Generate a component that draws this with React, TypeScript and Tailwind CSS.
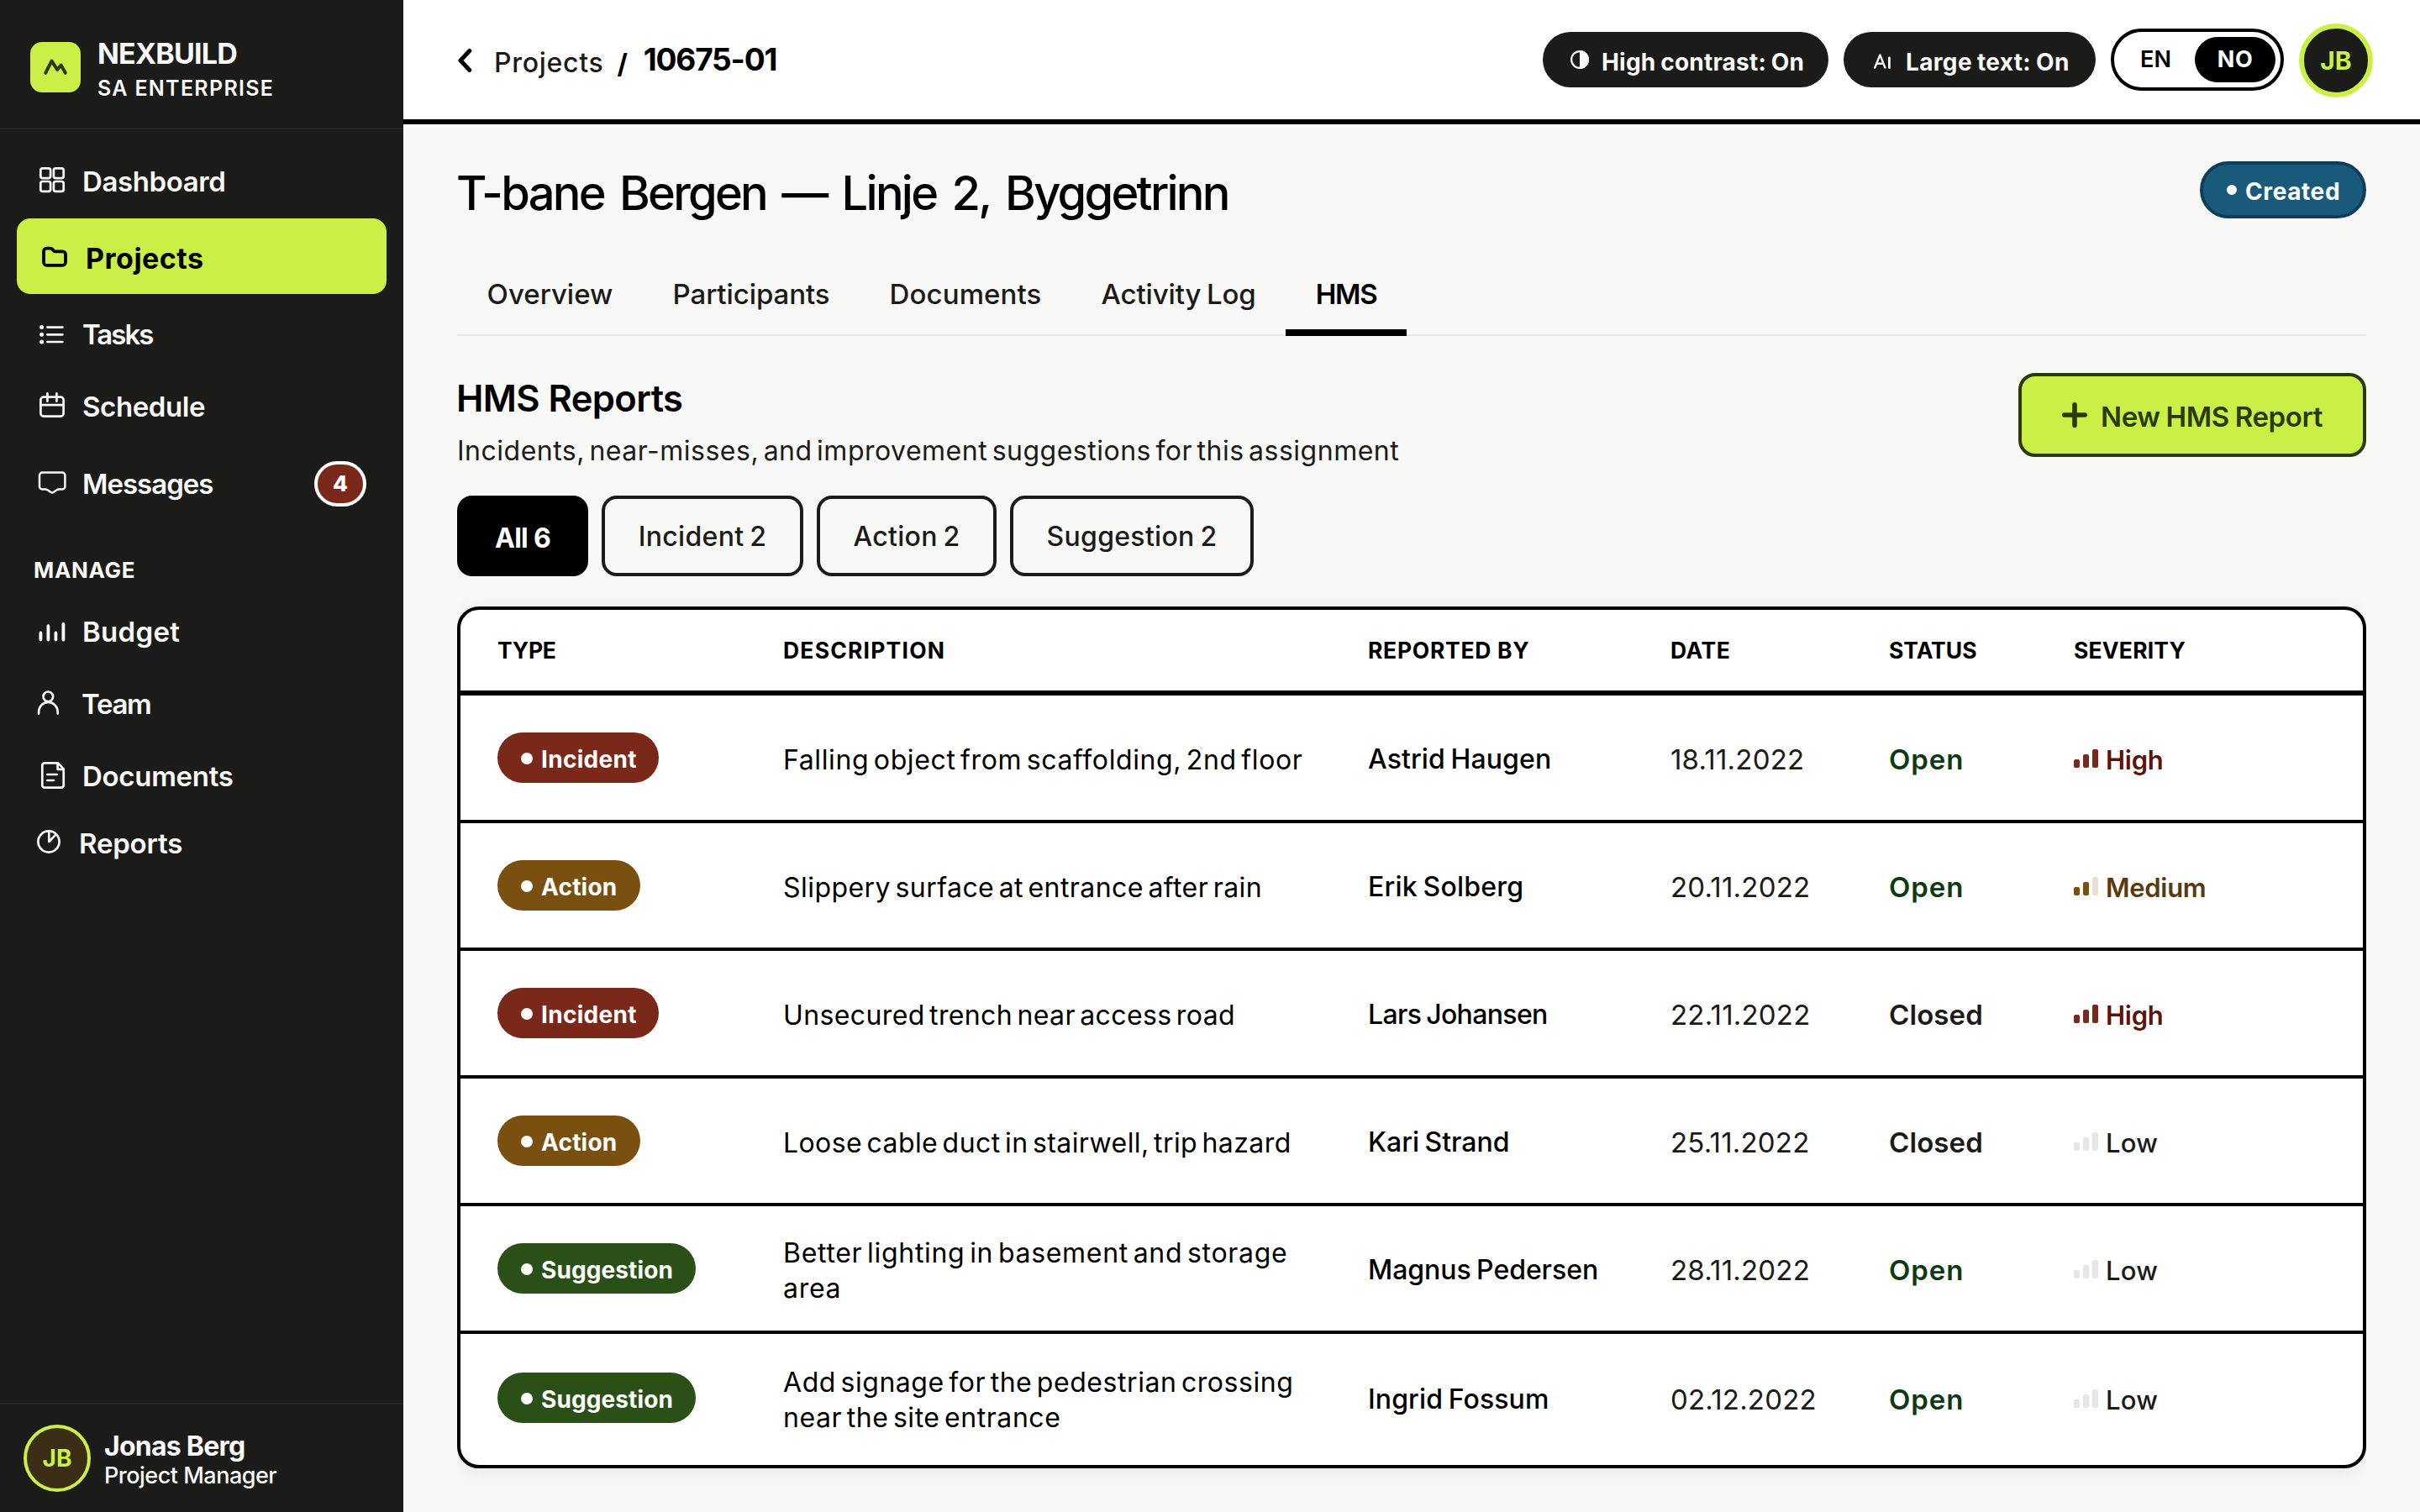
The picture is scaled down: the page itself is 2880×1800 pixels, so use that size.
import React from "react";
import clsx from "clsx";

type IconName =
  | "dashboard" | "projects" | "tasks" | "schedule" | "messages"
  | "budget" | "team" | "documents" | "reports";

const iconShapes: Record<IconName, React.ReactNode> = {
  dashboard: (
    <>
      <rect x="4.3" y="2.3" width="11.8" height="11.8" rx="2.4" />
      <rect x="19.9" y="2.3" width="11.8" height="11.8" rx="2.4" />
      <rect x="4.3" y="18" width="11.8" height="11.8" rx="2.4" />
      <rect x="19.9" y="18" width="11.8" height="11.8" rx="2.4" />
    </>
  ),
  projects: (
    <path
      strokeWidth="3.8"
      d="M4 12.2a3.6 3.6 0 0 1 3.6-3.6h4.2c1.1 0 1.9.4 2.6 1.2l1.2 1.4c.7.8 1.5 1.2 2.6 1.2h8.2a3.6 3.6 0 0 1 3.6 3.6v9.2a3.6 3.6 0 0 1-3.6 3.6H7.6a3.6 3.6 0 0 1-3.6-3.6z"
    />
  ),
  tasks: (
    <>
      <path d="M12.4 9.6h18M12.4 18.3h18M12.4 27h18" />
      <g fill="currentColor" stroke="none">
        <circle cx="5.6" cy="9.6" r="2.5" />
        <circle cx="5.6" cy="18.3" r="2.5" />
        <circle cx="5.6" cy="27" r="2.5" />
      </g>
    </>
  ),
  schedule: (
    <>
      <rect x="4.4" y="6.7" width="27.2" height="22.9" rx="3.4" />
      <path d="M4.4 16.2h27.2M12.4 2.4v9.3M23.4 2.4v9.3" />
    </>
  ),
  messages: (
    <path
      strokeWidth="2.5"
      d="M6.2 4.6h24a3.2 3.2 0 0 1 3.2 3.2v13.4a3.2 3.2 0 0 1-3.2 3.2h-4.4c-.9 0-1.5.3-2.2.9l-4 2.7c-1.1.8-1.9.8-3 0l-4-2.7c-.7-.6-1.3-.9-2.2-.9H6.2A3.2 3.2 0 0 1 3 21.2V7.8a3.2 3.2 0 0 1 3.2-3.2z"
    />
  ),
  budget: <path strokeWidth="3.8" d="M4.4 19.4v8.2M13.4 11.2v16.4M22.4 19.4v8.2M31.4 9v18.6" />,
  team: (
    <>
      <circle cx="13.3" cy="9.3" r="5.8" />
      <path d="M2.1 29.6v-1.8a11.3 12 0 0 1 22.6 0v1.8" />
    </>
  ),
  documents: (
    <>
      <path d="M9.2 2.4H25l6.7 7v19.4a2.9 2.9 0 0 1-2.9 2.9H9.2a2.9 2.9 0 0 1-2.9-2.9V5.3a2.9 2.9 0 0 1 2.9-2.9z" />
      <path d="M24.6 2.8v7h7M12.4 16h11.2M12.4 23h7.6" />
    </>
  ),
  reports: (
    <>
      <circle cx="14" cy="16" r="12.6" />
      <path d="M14.3 4v12l8-8.4" />
    </>
  ),
};

function Icon({ name }: { name: IconName }) {
  return (
    <svg
      viewBox="0 0 36 36"
      className="size-9 shrink-0"
      fill="none"
      stroke="currentColor"
      strokeWidth="2.7"
      strokeLinecap="round"
      strokeLinejoin="round"
    >
      {iconShapes[name]}
    </svg>
  );
}

function NavItem({ icon, label, row, text, badge }: { icon: IconName; label: string; row: string; text: string; badge?: string }) {
  return (
    <a className={clsx("flex h-[60px] items-center pl-6 pr-1 text-[33px] font-semibold leading-[60px]", row)}>
      <Icon name={icon} />
      <span className={text}>{label}</span>
      {badge && (
        <span className="ml-auto mr-5 flex h-[54px] w-[62px] items-center justify-center rounded-full border-4 border-white bg-[#7a2819] text-[26px] font-extrabold text-white">
          {badge}
        </span>
      )}
    </a>
  );
}

function Sidebar() {
  return (
    <aside className="flex h-full w-[480px] shrink-0 flex-col bg-[#1b1b19] text-[#f8f8f6]">
      <div className="flex h-[154px] shrink-0 gap-[18px] border-b-2 border-[#272725] pl-9 pt-[44px]">
        <div className="mt-[6px] size-[60px] rounded-[14px] bg-[#caf047]">
          <svg viewBox="0 0 60 60" className="size-full" fill="none" stroke="#2b3b07" strokeWidth="4" strokeLinecap="round" strokeLinejoin="round">
            <path d="M18.2 36.8 25.5 22.6 32.2 33l4.5-5.4 5.1 9.2" />
          </svg>
        </div>
        <div>
          <div className="ml-[2px] text-[34px] font-bold leading-10 tracking-[-0.8px]">NEXBUILD</div>
          <div className="ml-[2px] text-[25px] font-semibold leading-[42px] tracking-[1.3px]">SA ENTERPRISE</div>
        </div>
      </div>
      <nav className="flex flex-col px-5">
        <NavItem icon="dashboard" label="Dashboard" row="mt-8" text="ml-[18px] tracking-[-0.4px]" />
        <NavItem
          icon="projects"
          label="Projects"
          row="mt-[14px] h-[90px] rounded-2xl bg-[#caf047] pl-7! text-black"
          text="ml-[18px] mt-[5px] text-[34px] font-bold tracking-[0.5px]"
        />
        <NavItem icon="tasks" label="Tasks" row="mt-[18px]" text="ml-[18px] tracking-[-2px]" />
        <NavItem icon="schedule" label="Schedule" row="mt-[26px]" text="ml-[18px] tracking-[-0.4px]" />
        <NavItem icon="messages" label="Messages" row="mt-8" text="ml-[18px] tracking-[-1px]" badge="4" />
        <div className="mt-[53px] pl-5 text-[26px] font-bold leading-10 tracking-[0.7px]">MANAGE</div>
        <NavItem icon="budget" label="Budget" row="mt-[23px]" text="ml-[18px] tracking-[0.3px]" />
        <NavItem icon="team" label="Team" row="mt-[26px]" text="ml-[17px] tracking-[-1.3px]" />
        <NavItem icon="documents" label="Documents" row="mt-[26px]" text="ml-[18px] tracking-[-0.3px]" />
        <NavItem icon="reports" label="Reports" row="mt-5" text="ml-[14px] tracking-[-0.2px]" />
      </nav>
      <div className="mt-auto flex h-[130px] items-start border-t-2 border-[#272725] pl-7 pt-6">
        <div className="flex size-20 items-center justify-center rounded-full border-4 border-[#caf047] bg-[#3b2d16] text-[28px] font-bold text-[#caf047]">
          JB
        </div>
        <div className="ml-4 mt-2">
          <div className="text-[32px] font-bold leading-9 tracking-[-0.75px]">Jonas Berg</div>
          <div className="text-[27px] font-medium leading-[34px] tracking-[-0.5px]">Project Manager</div>
        </div>
      </div>
    </aside>
  );
}

function Header() {
  return (
    <header className="flex h-[148px] shrink-0 items-center border-b-[6px] border-black bg-white pl-16 pr-14 text-black">
      <svg viewBox="0 0 20 32" className="h-8 w-5" fill="none" stroke="currentColor" strokeWidth="5" strokeLinecap="round" strokeLinejoin="round">
        <path d="M14.8 5.5 4 17l10.8 11.5" />
      </svg>
      <span className="ml-6 mt-[7px] text-[32px] font-medium leading-10 tracking-[0.7px] text-[#1b1b19]">Projects</span>
      <span className="ml-4 mt-[9px] text-[32px] font-bold leading-10">/</span>
      <span className="ml-[19px] text-[37px] font-bold leading-10 tracking-[-1.2px]">10675-01</span>
      <div className="ml-auto flex items-center text-[#f8f8f6]">
        <div className="flex h-[66px] w-[340px] items-center rounded-full bg-[#1b1b19] pl-[33px]">
          <svg viewBox="0 0 22 22" className="size-[22px]">
            <circle cx="11" cy="11" r="9.9" fill="none" stroke="currentColor" strokeWidth="2.2" />
            <path d="M11 0a11 11 0 0 1 0 22z" fill="currentColor" />
          </svg>
          <span className="ml-[15px] mt-[5px] whitespace-nowrap text-[28px] font-bold leading-9 tracking-[0.2px] [word-spacing:-1px]">High contrast: On</span>
        </div>
        <div className="ml-[18px] flex h-[66px] w-[300px] items-center rounded-full bg-[#1b1b19] pl-9">
          <svg viewBox="0 0 20 18" className="mt-[3px] h-[18px] w-5" fill="none" stroke="currentColor" strokeWidth="2.4" strokeLinecap="round" strokeLinejoin="round">
            <path d="M1.2 16.6 7.4 1.4l6 15.2M3.6 11.8h7.6" />
            <path d="M18.4 4.8v11.8" strokeWidth="2.8" />
          </svg>
          <span className="ml-[18px] mt-[5px] whitespace-nowrap text-[28px] font-bold leading-9 tracking-[0.35px] [word-spacing:-1px]">Large text: On</span>
        </div>
        <div className="ml-[18px] flex h-[74px] w-[206px] items-center rounded-full border-4 border-black px-[6px] text-[27px]">
          <span className="flex-1 pr-[3px] text-center font-semibold tracking-[0.2px] text-black">EN</span>
          <span className="flex h-[54px] w-24 items-center justify-center rounded-full bg-black font-bold tracking-[0.5px] text-white">NO</span>
        </div>
        <div className="ml-[18px] mt-[2px] flex size-[88px] items-center justify-center rounded-full border-[6px] border-[#caf047] bg-[#1b1b19] text-[30px] font-bold text-[#caf047]">
          JB
        </div>
      </div>
    </header>
  );
}

const tabs = [
  { label: "Overview", size: "w-[221px]" },
  { label: "Participants", size: "w-[258px] tracking-[-0.1px]" },
  { label: "Documents", size: "w-[252px] tracking-[0.1px]" },
  { label: "Activity Log", size: "w-[255px] tracking-[-0.15px] [word-spacing:-2px]" },
];

const filters = [
  { label: "Incident 2", size: "w-60" },
  { label: "Action 2", size: "w-[214px]" },
  { label: "Suggestion 2", size: "w-[290px]" },
];

const columns = [
  { label: "TYPE", track: "tracking-[-0.2px]" },
  { label: "DESCRIPTION", track: "tracking-[1.2px] pl-[2px]" },
  { label: "REPORTED BY", track: "tracking-[0.7px] pl-px" },
  { label: "DATE", track: "tracking-[0.5px] pl-px" },
  { label: "STATUS", track: "tracking-[0px] pl-px" },
  { label: "SEVERITY", track: "tracking-[0.2px]" },
];

type Kind = "Incident" | "Action" | "Suggestion";
type Level = "High" | "Medium" | "Low";

const kindStyle: Record<Kind, string> = {
  Incident: "w-48 bg-[#7a2819] tracking-[0.3px]",
  Action: "w-[170px] bg-[#7a5010] tracking-[0.2px]",
  Suggestion: "w-[236px] bg-[#2a5018] tracking-[0.1px]",
};

const levelStyle: Record<Level, { text: string; bars: string[] }> = {
  High: { text: "font-semibold text-[#5c130b] tracking-[-0.3px]", bars: ["bg-[#7a2819]", "bg-[#7a2819]", "bg-[#7a2819]"] },
  Medium: { text: "font-semibold text-[#5a3a0c] tracking-[-0.3px]", bars: ["bg-[#7a5010]", "bg-[#7a5010]", "bg-[#e6dfd3]"] },
  Low: { text: "font-medium text-[#1b1b19] tracking-[0.3px]", bars: ["bg-[#e6e6e6]", "bg-[#e6e6e6]", "bg-[#e6e6e6]"] },
};

const barHeights = ["h-[10px]", "h-4", "h-[22px]"];

const reports: { kind: Kind; text: string[]; by: string; date: string; open: boolean; level: Level; track: string; byTrack: string }[] = [
  { kind: "Incident", text: ["Falling object from scaffolding, 2nd floor"], by: "Astrid Haugen", date: "18.11.2022", open: true, level: "High", track: "tracking-[0.62px]", byTrack: "tracking-[0.1px]" },
  { kind: "Action", text: ["Slippery surface at entrance after rain"], by: "Erik Solberg", date: "20.11.2022", open: true, level: "Medium", track: "tracking-[0.45px]", byTrack: "tracking-[0.2px]" },
  { kind: "Incident", text: ["Unsecured trench near access road"], by: "Lars Johansen", date: "22.11.2022", open: false, level: "High", track: "tracking-[0.38px]", byTrack: "tracking-[-0.65px]" },
  { kind: "Action", text: ["Loose cable duct in stairwell, trip hazard"], by: "Kari Strand", date: "25.11.2022", open: false, level: "Low", track: "tracking-[0.42px]", byTrack: "tracking-[0px]" },
  { kind: "Suggestion", text: ["Better lighting in basement and storage", "area"], by: "Magnus Pedersen", date: "28.11.2022", open: true, level: "Low", track: "tracking-[0.7px]", byTrack: "tracking-[-0.05px]" },
  { kind: "Suggestion", text: ["Add signage for the pedestrian crossing", "near the site entrance"], by: "Ingrid Fossum", date: "02.12.2022", open: true, level: "Low", track: "tracking-[0.55px]", byTrack: "tracking-[0.1px]" },
];

const grid = "grid grid-cols-[338px_697px_360px_260px_221px_1fr] items-center pl-11";

function ReportsTable() {
  return (
    <section className="mt-9 overflow-hidden rounded-[26px] border-4 border-black bg-white text-black shadow-[0_4px_24px_rgba(0,0,0,0.08)] [clip-path:inset(-40px_0)]">
      <div className={clsx(grid, "h-[102px] border-b-[6px] border-black pt-[2px] text-[26.5px] font-bold")}>
        {columns.map((c) => (
          <span key={c.label} className={c.track}>{c.label}</span>
        ))}
      </div>
      {reports.map((r) => (
        <div key={r.text[0]} className={clsx(grid, "h-[152px] border-b-4 border-black text-[32px] leading-[42px] last:h-[156px] last:border-b-0 last:pb-1")}>
          <span className={clsx("flex h-[60px] items-center rounded-full pl-7 text-[28px] font-bold text-white", kindStyle[r.kind])}>
            <span className="mr-[10px] mt-[2px] size-[14px] rounded-full bg-white" />
            <span className="mt-1">{r.kind}</span>
          </span>
          <span className={clsx("mt-[5px] whitespace-nowrap pl-[2px] [word-spacing:-4px]", r.track)}>
            {r.text.map((line) => (
              <span key={line} className="block">{line}</span>
            ))}
          </span>
          <span className={clsx("mt-1 pl-px font-medium [word-spacing:-2px]", r.byTrack)}>{r.by}</span>
          <span className="mt-1 pl-px text-[33px] tracking-[0.2px] text-[#1b1b19]">{r.date}</span>
          <span className={clsx("mt-1 pl-px text-[33px] font-semibold", r.open ? "tracking-[0.9px] text-[#0d3a12]" : "tracking-[0.1px] text-[#1b1b19]")}>
            {r.open ? "Open" : "Closed"}
          </span>
          <span className="flex items-center">
            <span className="mt-[2px] flex h-[22px] items-end gap-1">
              {levelStyle[r.level].bars.map((color, i) => (
                <span key={i} className={clsx("w-[7px] rounded-[2px]", barHeights[i], color)} />
              ))}
            </span>
            <span className={clsx("ml-[9px] mt-[5px] text-[31px]", levelStyle[r.level].text)}>{r.level}</span>
          </span>
        </div>
      ))}
    </section>
  );
}

export default function App() {
  return (
    <div className="flex h-[1800px] w-[2880px] overflow-hidden bg-[#f8f8f6] font-['Inter',sans-serif]">
      <Sidebar />
      <div className="flex min-w-0 flex-1 flex-col">
        <Header />
        <main className="flex flex-col px-16 pt-11">
          <div className="flex h-[74px] items-start justify-between">
            <h1 className="-ml-px mt-px text-[56px] font-[550] leading-[74px] tracking-[-2.75px] text-black [word-spacing:6px]">T-bane Bergen — Linje 2, Byggetrinn</h1>
            <span className="flex h-[68px] w-[198px] items-center rounded-full border-4 border-[#0f3f58] bg-[#195a7b] pl-7 text-[28px] font-bold tracking-[0.6px] text-white">
              <span className="mr-[10px] size-3 rounded-full bg-white" />
              <span className="mt-[3px]">Created</span>
            </span>
          </div>
          <div className="mt-[34px] flex h-[100px] border-b-2 border-[#e6e6e4] text-center text-[33px] font-medium leading-[100px] text-[#1b1b19]">
            {tabs.map((t) => (
              <span key={t.label} className={clsx("shrink-0", t.size)}>{t.label}</span>
            ))}
            <span className="h-[100px] w-36 shrink-0 border-b-8 border-black font-semibold tracking-[-1.3px] text-black">HMS</span>
          </div>
          <div className="mt-11 flex h-[100px] justify-between">
            <div>
              <h2 className="-ml-px text-[43.5px] font-semibold leading-[60px] tracking-[-0.6px] text-black">HMS Reports</h2>
              <p className="mt-[13px] text-[32px] leading-10 tracking-[0.5px] text-[#1b1b19] [word-spacing:-4px]">
                Incidents, near-misses, and improvement suggestions for this assignment
              </p>
            </div>
            <button className="flex h-[100px] w-[414px] items-center rounded-[20px] border-4 border-[#2b3b07] bg-[#caf047] pl-12 text-[33px] font-semibold tracking-[-0.4px] text-[#2b3b07] [word-spacing:-1px]">
              <svg viewBox="0 0 30 30" className="size-[30px] shrink-0" fill="none" stroke="currentColor" strokeWidth="5.6" strokeLinecap="round">
                <path d="M15 2.8v24.4M2.8 15h24.4" />
              </svg>
              <span className="ml-4 mt-[5px] whitespace-nowrap">New HMS Report</span>
            </button>
          </div>
          <div className="mt-[46px] flex h-24 gap-4 text-[32px] font-medium tracking-[0.3px] text-[#1b1b19] [word-spacing:-2px]">
            <span className="flex w-[156px] items-center justify-center rounded-[18px] bg-black pt-[5px] font-bold tracking-[-0.7px] text-white [word-spacing:0px]">All 6</span>
            {filters.map((f) => (
              <span key={f.label} className={clsx("flex items-center justify-center rounded-[18px] border-4 border-[#1b1b19] pt-px", f.size)}>
                {f.label}
              </span>
            ))}
          </div>
          <ReportsTable />
        </main>
      </div>
    </div>
  );
}
